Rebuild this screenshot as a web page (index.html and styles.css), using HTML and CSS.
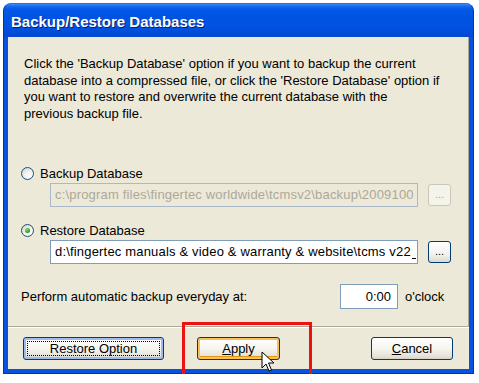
FILE: index.html
```html
<!DOCTYPE html>
<html>
<head>
<meta charset="utf-8">
<link rel="stylesheet" href="styles.css">
</head>
<body>
<div class="window">
  <div class="titlebar">Backup/Restore Databases</div>
  <div class="client">
    <div class="panel">
      <p class="intro">Click the 'Backup Database' option if you want to backup the current<br>database into a compressed file, or click the 'Restore Database' option if<br>you want to restore and overwrite the current database with the<br>previous backup file.</p>
      <div class="option first">
        <div class="radio-row"><span class="radio"></span><span>Backup Database</span></div>
        <div class="path-row">
          <div class="field disabled">c:\program files\fingertec worldwide\tcmsv2\backup\2009100</div>
          <div class="browse disabled">...</div>
        </div>
      </div>
      <div class="option second">
        <div class="radio-row"><span class="radio checked"></span><span>Restore Database</span></div>
        <div class="path-row">
          <div class="field">d:\fingertec manuals &amp; video &amp; warranty &amp; website\tcms v22<span class="caret"></span></div>
          <div class="browse">...</div>
        </div>
      </div>
      <div class="auto-row">
        <span class="auto-label">Perform automatic backup everyday at:</span>
        <div class="time">0:00</div>
        <span class="oclock">o'clock</span>
      </div>
    </div>
    <div class="buttons">
      <div class="btn focus"><span class="focus-rect">Restore Option</span></div>
      <div class="btn hover"><span><u>A</u>pply</span></div>
      <div class="spacer"></div>
      <div class="btn cancel"><span><u>C</u>ancel</span></div>
    </div>
  </div>
  <div class="highlight"></div>
  <svg class="cursor" width="14" height="22" viewBox="0 0 14 22">
    <path d="M1 1 L1 17 L5 13 L8 20 L10.5 19 L7.5 12 L13 12 Z" fill="#fff" stroke="#000" stroke-width="1" stroke-linejoin="miter"/>
  </svg>
</div>
</body>
</html>
```
FILE: styles.css
```css
html, body {
  margin: 0;
  padding: 0;
  background: #ffffff;
}
body {
  font-family: "Liberation Sans", Arial, sans-serif;
  font-size: 13px;
  color: #000;
}
.window {
  position: relative;
  margin: 3px 0 0 3px;
  width: 471px;
  height: 371px;
  box-sizing: border-box;
  background: #0852dd;
  border-radius: 8px 8px 0 0;
  border: 1px solid #0831a8;
  border-top-color: #2a6af0;
  display: flex;
  flex-direction: column;
}
.titlebar {
  height: 33px;
  box-sizing: border-box;
  padding: 9px 0 0 7px;
  color: #fff;
  font-weight: bold;
  font-size: 15px;
  text-shadow: 1px 1px 0 #0a1e6e;
  border-radius: 7px 7px 0 0;
  background: linear-gradient(to bottom, #3b8cfb 0, #1c6cf4 2px, #0458e6 5px, #0054e3 12px, #0151e0 24px, #0049d4 31px, #0a48c8 33px);
}
.client {
  flex: 1;
  margin: 0 4px 4px 4px;
  background: #ece9d8;
  display: flex;
  flex-direction: column;
}
.panel {
  height: 290px;
  box-sizing: border-box;
  border-right: 1px solid #aca899;
  border-bottom: 1px solid #aca899;
  padding: 19px 0 0 16px;
  display: flex;
  flex-direction: column;
}
.intro {
  margin: 0;
  line-height: 16.7px;
  white-space: nowrap;
}
.option {
  display: flex;
  flex-direction: column;
}
.option.first { margin-top: 43px; }
.option.second { margin-top: 16px; }
.radio-row {
  display: flex;
  align-items: center;
  gap: 6px;
  height: 16px;
  margin-left: -3px;
}
.radio {
  width: 11px;
  height: 11px;
  border-radius: 50%;
  border: 1px solid #1c5180;
  background: radial-gradient(circle at 65% 70%, #ffffff 0, #f3f2ec 40%, #d6d3c6 90%);
  position: relative;
  flex: none;
}
.radio.checked::after {
  content: "";
  position: absolute;
  left: 3px;
  top: 3px;
  width: 5px;
  height: 5px;
  border-radius: 50%;
  background: radial-gradient(circle at 40% 35%, #8ee08a 0, #21a121 60%, #1a8a1a 100%);
}
.path-row {
  display: flex;
  align-items: center;
  margin-top: 1px;
  padding-left: 26px;
  gap: 10px;
}
.field {
  width: 368px;
  height: 24px;
  box-sizing: border-box;
  border: 1px solid #7f9db9;
  background: #fff;
  padding: 0 0 0 4px;
  line-height: 22px;
  letter-spacing: 0.18px;
  white-space: nowrap;
  overflow: hidden;
}
.caret {
  display: inline-block;
  width: 4px;
  height: 1px;
  background: #000;
  vertical-align: -3px;
  margin-left: 1px;
}
.field.disabled {
  background: #ece9d8;
  border-color: #a9b9c9;
  color: #aca899;
}
.browse {
  width: 23px;
  height: 22px;
  box-sizing: border-box;
  border: 1px solid #003c74;
  border-radius: 3px;
  background: linear-gradient(to bottom, #ffffff 0, #f4f3ee 60%, #dcd9cc 100%);
  text-align: center;
  font-size: 11px;
  line-height: 18px;
  color: #000;
}
.browse.disabled {
  border-color: #c9c7ba;
  background: #f5f4ea;
  color: #aca899;
}
.auto-row {
  display: flex;
  align-items: center;
  margin-top: 20px;
  margin-left: -3px;
  height: 25px;
}
.auto-label { width: 319px; }
.time {
  width: 58px;
  height: 25px;
  box-sizing: border-box;
  border: 1px solid #7f9db9;
  background: #fff;
  text-align: right;
  padding-right: 6px;
  line-height: 23px;
}
.oclock { margin-left: 7px; }
.buttons {
  flex: 1;
  display: flex;
  align-items: flex-start;
  padding: 9px 15px 0 15px;
  gap: 33px;
  border-top: 1px solid #fff;
}
.spacer { flex: 1; }
.btn {
  height: 23px;
  box-sizing: border-box;
  border: 1px solid #003c74;
  border-radius: 3px;
  background: linear-gradient(to bottom, #ffffff 0, #f6f5f0 50%, #e3e0d5 90%, #d6d0c5 100%);
  display: flex;
  align-items: center;
  justify-content: center;
}
.btn.focus {
  width: 141px;
  box-shadow: inset 0 0 0 2px #9dbbef;
  padding: 3px;
}
.focus-rect {
  flex: 1;
  align-self: stretch;
  border: 1px dotted #000;
  display: flex;
  align-items: center;
  justify-content: center;
}
.btn.hover {
  width: 83px;
  box-shadow: inset 0 0 0 2px #f9c05a, inset 0 -1px 0 2px #e5970f;
}
.btn.cancel {
  width: 82px;
  margin-right: 1px;
}
.highlight {
  position: absolute;
  left: 178px;
  top: 318px;
  width: 130px;
  height: 56px;
  box-sizing: border-box;
  border: 3px solid #ee1111;
}
.cursor {
  position: absolute;
  left: 257px;
  top: 347px;
}
```
